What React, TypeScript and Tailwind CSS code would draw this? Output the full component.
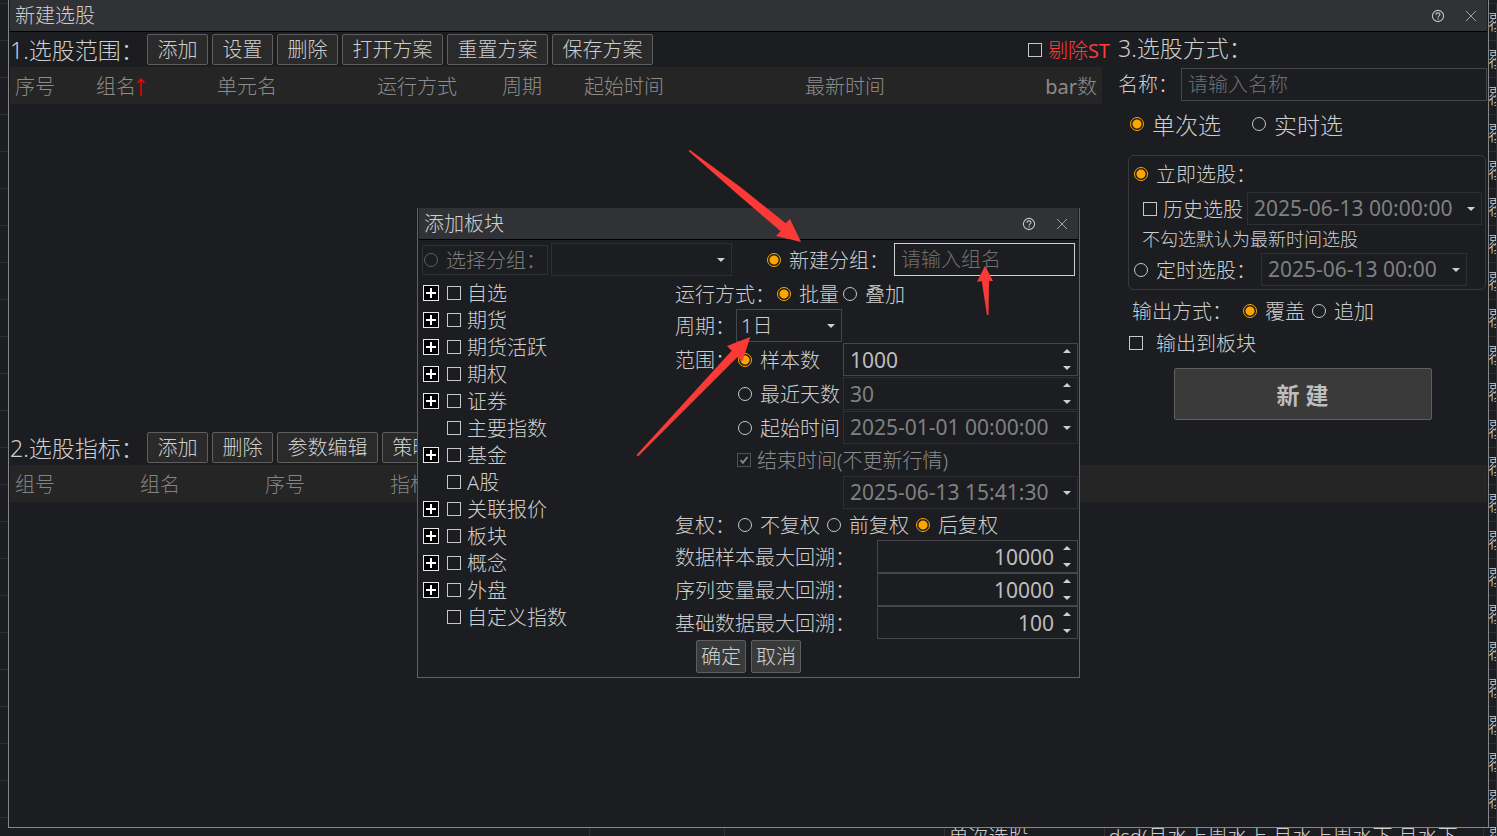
import { useState } from "react"
import type { ReactNode } from "react"
import clsx from "clsx"

interface ResultRow {
    mode: string
    plan: string
    output: string
}

const RESULTS: ResultRow[] = [
    ...Array.from({ length: 22 }, () => ({ mode: "", plan: "", output: "覆" })),
    { mode: "单次选股", plan: "dsd(月水上周水上 月水上周水下 月水下", output: "覆" },
]

const SECTORS = [
    { name: "自选", expandable: true },
    { name: "期货", expandable: true },
    { name: "期货活跃", expandable: true },
    { name: "期权", expandable: true },
    { name: "证券", expandable: true },
    { name: "主要指数", expandable: false },
    { name: "基金", expandable: true },
    { name: "A股", expandable: false },
    { name: "关联报价", expandable: true },
    { name: "板块", expandable: true },
    { name: "概念", expandable: true },
    { name: "外盘", expandable: true },
    { name: "自定义指数", expandable: false },
]

const LOOKBACKS = [
    { label: "数据样本最大回溯：", value: "10000" },
    { label: "序列变量最大回溯：", value: "10000" },
    { label: "基础数据最大回溯：", value: "100" },
]

function TitleBar({ title }: { title: string }) {
    return (
        <header className="flex h-8 items-center border-b border-black bg-[#313236] pl-[5px] text-xl">
            <h1>{title}</h1>
            <div className="ml-auto flex items-center gap-4 pr-[7px]">
                <button type="button" aria-label="帮助" className="flex size-4 items-center justify-center">
                    <svg viewBox="0 0 14 14" className="size-[14px]" fill="none" stroke="#c4c4c4" strokeWidth="1.1">
                        <circle cx="7" cy="7" r="5.6" />
                        <path d="M5 5.8C5 4.5 5.9 3.9 7 3.9s2 .7 2 1.7c0 1.2-1.9 1.4-1.9 2.8M7.1 9.3v1.2" />
                    </svg>
                </button>
                <button type="button" aria-label="关闭" className="flex size-[18px] items-center justify-center">
                    <svg viewBox="0 0 12 12" className="size-3" fill="none" stroke="#a2a2a2" strokeWidth="1">
                        <path d="M1 1l10 10M11 1L1 11" />
                    </svg>
                </button>
            </div>
        </header>
    )
}

function ToolButton({ children }: { children: string }) {
    return (
        <button
            type="button"
            className={clsx(
                "h-[31px] shrink-0 rounded-xs border border-[#5e5e5e] bg-[#2a2a2a] pt-px text-xl leading-none",
                children.length > 2 ? "w-[101px]" : "w-[61px]"
            )}
        >
            {children}
        </button>
    )
}

interface RadioProps {
    name: string
    label: string
    defaultChecked?: boolean
    disabled?: boolean
    className?: string
}

function Radio({ name, label, defaultChecked, disabled, className }: RadioProps) {
    return (
        <label className={clsx("flex shrink-0 items-center gap-2 whitespace-nowrap", disabled && "text-[#7d7d7d]", className)}>
            <input
                type="radio"
                name={name}
                defaultChecked={defaultChecked}
                disabled={disabled}
                className="size-[14px] shrink-0 appearance-none rounded-full border border-[#c8c8c8] checked:border-[#ffa500] checked:bg-[radial-gradient(circle,#ffa500_4px,transparent_5px)] disabled:border-[#606060]"
            />
            <span className="pt-0.5 leading-none">{label}</span>
        </label>
    )
}

function Checkbox({ label, className }: { label: ReactNode; className?: string }) {
    return (
        <label className={clsx("flex shrink-0 items-center whitespace-nowrap", className)}>
            <input type="checkbox" className="size-[14px] shrink-0 appearance-none border border-[#c8c8c8] checked:bg-[#ffa500]" />
            <span className="pt-0.5 leading-none">{label}</span>
        </label>
    )
}

function Caret({ up = false }: { up?: boolean }) {
    return (
        <svg viewBox="0 0 8 4" className={up ? "h-1 w-2 rotate-180" : "h-1 w-2"}>
            <path d="M0 0h8L4 4z" fill="#cfcfcf" />
        </svg>
    )
}

interface DropdownProps {
    label: string
    value: string
    className?: string
    dim?: boolean
}

function Dropdown({ label, value, className, dim }: DropdownProps) {
    return (
        <div className={clsx("relative h-[33px] shrink-0", className)}>
            <select
                aria-label={label}
                className={clsx(
                    "size-full appearance-none border bg-transparent leading-none",
                    dim ? "border-[#2e2f32] pl-1.5 text-[21px] font-normal text-[#808080]" : "border-[#46474a] pl-1 text-xl"
                )}
            >
                <option>{value}</option>
            </select>
            <span className="pointer-events-none absolute inset-y-0 right-[7px] flex items-center">
                <Caret />
            </span>
        </div>
    )
}

interface SpinBoxProps {
    label: string
    initial: string
    className?: string
    dim?: boolean
    alignRight?: boolean
}

function SpinBox({ label, initial, className, dim, alignRight }: SpinBoxProps) {
    const [value, setValue] = useState(initial)
    const step = (delta: number) => setValue(String(Math.max(0, Number(value) + delta)))

    return (
        <div className={clsx("flex h-[33px] shrink-0 border", dim ? "border-[#2e2f32] text-[#808080]" : "border-[#46474a] text-[#bebebe]", className)}>
            <input
                aria-label={label}
                value={value}
                onChange={(e) => setValue(e.target.value)}
                className={clsx("w-full min-w-0 flex-1 bg-transparent pl-1.5 text-[21px] leading-none font-normal", alignRight && "text-right")}
            />
            <div className="flex w-[23px] flex-col pl-1.5 pr-1">
                <button type="button" aria-label="增加" onClick={() => step(1)} className="flex flex-1 items-center justify-center">
                    <Caret up />
                </button>
                <button type="button" aria-label="减少" onClick={() => step(-1)} className="flex flex-1 items-center justify-center pt-0.5">
                    <Caret />
                </button>
            </div>
        </div>
    )
}

// 底层的选股结果表，被窗口遮住大部分
function ResultTable() {
    return (
        <table className="w-full table-fixed border-collapse text-xl leading-none">
            <colgroup>
                <col className="w-[589px]" />
                <col className="w-[135px]" />
                <col className="w-[220px]" />
                <col className="w-[160px]" />
                <col />
                <col className="w-[13px]" />
            </colgroup>
            <tbody>
                <tr className="h-[3px] border-b border-[#2f3033]">
                    <td colSpan={6} className="p-0" />
                </tr>
                {RESULTS.map(({ mode, plan, output }, i) => (
                    <tr key={i} className="h-[37px] border-b border-[#2f3033] [&>td]:overflow-hidden [&>td]:whitespace-nowrap [&>td]:border-r [&>td]:border-[#2f3033] [&>td]:pl-1 [&>td]:pt-0.5">
                        <td />
                        <td />
                        <td />
                        <td>{mode}</td>
                        <td>{plan}</td>
                        <td>{output}</td>
                    </tr>
                ))}
            </tbody>
        </table>
    )
}

function RangeSection() {
    return (
        <section className="min-w-0 flex-1">
            <div className="flex h-[35px] items-center gap-1 text-xl">
                <h2 className="w-[133px] shrink-0 whitespace-nowrap pt-0.5 text-[23px]">1.选股范围：</h2>
                <ToolButton>添加</ToolButton>
                <ToolButton>设置</ToolButton>
                <ToolButton>删除</ToolButton>
                <ToolButton>打开方案</ToolButton>
                <ToolButton>重置方案</ToolButton>
                <ToolButton>保存方案</ToolButton>
                <Checkbox
                    label={<>剔除<span className="font-normal">ST</span></>}
                    className="ml-auto gap-1.5 text-[#ff3b3b]"
                />
            </div>
            <div className="pr-2">
                <table className="w-full table-fixed bg-[#252525] text-xl leading-none text-[#8c8c8c]">
                    <thead>
                        <tr className="h-[37px] text-left [&>th]:px-[5px] [&>th]:pb-0 [&>th]:pt-0.5 [&>th]:font-light">
                            <th className="w-[81px]">序号</th>
                            <th className="w-[121px]">
                                <span className="flex items-center">
                                    组名
                                    <svg viewBox="0 0 10 18" className="h-[18px] w-[10px]" fill="none" stroke="#ff0000" strokeWidth="1.4">
                                        <path d="M5 18V1M1.5 5L5 1l3.5 4" />
                                    </svg>
                                </span>
                            </th>
                            <th className="w-[160px]">单元名</th>
                            <th className="w-[125px]">运行方式</th>
                            <th className="w-[82px]">周期</th>
                            <th className="w-[221px]">起始时间</th>
                            <th>最新时间</th>
                            <th className="w-[80px] text-right">
                                <span className="font-normal">bar</span>数
                            </th>
                        </tr>
                    </thead>
                </table>
            </div>
        </section>
    )
}

function MethodSection() {
    return (
        <section className="w-[377px] shrink-0 pb-[10px] pl-2 text-xl">
            <h2 className="flex h-8 items-center text-[23px]">3.选股方式：</h2>
            <div className="mt-1 flex h-[33px] items-center">
                <label htmlFor="plan-name" className="w-[63px] shrink-0 whitespace-nowrap">名称：</label>
                <input
                    id="plan-name"
                    placeholder="请输入名称"
                    className="h-full min-w-0 flex-1 border border-[#46474a] bg-transparent pl-1.5 placeholder:text-[#707070]"
                />
            </div>
            <div className="flex h-[46px] items-center gap-[31px] pl-3 text-[23px]">
                <Radio name="mode" label="单次选" defaultChecked />
                <Radio name="mode" label="实时选" />
            </div>
            <div className="ml-[10px] mr-px mt-2 rounded-md border border-[#38393c] pb-[3px] pl-[5px] pr-[3px]">
                <Radio name="schedule" label="立即选股：" defaultChecked className="h-9" />
                <div className="flex items-center justify-between pl-[9px]">
                    <Checkbox label="历史选股" className="gap-1.5" />
                    <Dropdown label="历史时间" value="2025-06-13 00:00:00" dim className="w-[235px]" />
                </div>
                <p className="flex h-7 items-center pl-2 text-lg">不勾选默认为最新时间选股</p>
                <div className="flex items-center gap-[5px]">
                    <Radio name="schedule" label="定时选股：" />
                    <Dropdown label="定时时间" value="2025-06-13 00:00" dim className="w-[206px]" />
                </div>
            </div>
            <div className="flex h-[42px] items-center pl-[14px]">
                <span className="w-[111px] pt-0.5 leading-none">输出方式：</span>
                <div className="flex gap-[7px]">
                    <Radio name="output" label="覆盖" defaultChecked />
                    <Radio name="output" label="追加" />
                </div>
            </div>
            <Checkbox label="输出到板块" className="h-[22px] gap-[13px] pl-[11px]" />
            <button
                type="button"
                className="mx-auto mt-[14px] block h-[52px] w-[258px] rounded-xs border border-[#5e5e5e] bg-[#3a3a3a] pt-0.5 text-[23px] font-bold text-[#bebebe]"
            >
                新 建
            </button>
        </section>
    )
}

function IndicatorSection() {
    return (
        <section>
            <div className="flex h-[35px] items-center gap-1">
                <h2 className="w-[133px] shrink-0 whitespace-nowrap pt-0.5 text-[23px]">2.选股指标：</h2>
                <ToolButton>添加</ToolButton>
                <ToolButton>删除</ToolButton>
                <ToolButton>参数编辑</ToolButton>
                <ToolButton>策略编辑</ToolButton>
            </div>
            <table className="w-full table-fixed bg-[#252525] text-xl leading-none text-[#848484]">
                <thead>
                    <tr className="h-[37px] text-left [&>th]:px-[5px] [&>th]:pb-0 [&>th]:pt-0.5 [&>th]:font-light">
                        <th className="w-[125px]">组号</th>
                        <th className="w-[125px]">组名</th>
                        <th className="w-[125px]">序号</th>
                        <th>指标</th>
                    </tr>
                </thead>
            </table>
        </section>
    )
}

function SectorTree() {
    return (
        <ul className="w-[257px] shrink-0 pl-[5px]">
            {SECTORS.map(({ name, expandable }) => (
                <li key={name} className="flex h-[27px] items-center gap-2">
                    {expandable ? (
                        <button type="button" aria-label={`展开${name}`} className="size-4 border border-[#e8e8e8] bg-black">
                            <svg viewBox="0 0 14 14" className="size-[14px]" stroke="#ffffff" strokeWidth="2">
                                <path d="M2 7h10M7 2v10" />
                            </svg>
                        </button>
                    ) : (
                        <span className="size-4" />
                    )}
                    <Checkbox label={name} className="gap-1.5" />
                </li>
            ))}
        </ul>
    )
}

function FormRow({ label, className, children }: { label?: string; className: string; children: ReactNode }) {
    return (
        <div className={clsx("flex items-center", className)}>
            <span className="w-[63px] shrink-0 whitespace-nowrap pt-0.5 leading-none">{label}</span>
            {children}
        </div>
    )
}

function AddSectorDialog() {
    return (
        <div role="dialog" aria-label="添加板块" className="border border-t-0 border-[#0a78d0] bg-[#1c1d20] text-xl">
            <div className="px-px">
                <TitleBar title="添加板块" />
            </div>
            <div className="flex items-center gap-[3px] px-1 py-[3px]">
                <div className="flex h-[30px] w-[126px] items-center border border-[#2e2f32] pl-px">
                    <Radio name="group" label="选择分组：" disabled />
                </div>
                <Dropdown label="选择分组" value="" dim className="w-[181px]" />
                <div className="ml-auto flex items-center gap-[5px]">
                    <Radio name="group" label="新建分组：" defaultChecked />
                    <input
                        aria-label="组名"
                        placeholder="请输入组名"
                        className="h-[33px] w-[181px] border border-[#d0d0d0] bg-transparent pl-1.5 placeholder:text-[#707070]"
                    />
                </div>
            </div>
            <div className="flex pb-1">
                <SectorTree />
                <div className="min-w-0 flex-1 pr-px">
                    <div className="flex h-[30px] items-center gap-1">
                        <span className="w-[98px] shrink-0 whitespace-nowrap pt-0.5 leading-none">运行方式：</span>
                        <Radio name="run" label="批量" defaultChecked />
                        <Radio name="run" label="叠加" />
                    </div>
                    <div className="flex items-center">
                        <span className="w-[61px] whitespace-nowrap pt-0.5 leading-none">周期：</span>
                        <Dropdown label="周期" value="1日" className="w-[106px]" />
                    </div>
                    <div className="mt-px flex flex-col gap-px">
                        <FormRow label="范围：" className="h-[33px]">
                            <Radio name="range" label="样本数" defaultChecked className="w-[105px]" />
                            <SpinBox label="样本数" initial="1000" className="flex-1" />
                        </FormRow>
                        <FormRow className="h-[33px]">
                            <Radio name="range" label="最近天数" className="w-[105px]" />
                            <SpinBox label="最近天数" initial="30" dim className="flex-1" />
                        </FormRow>
                        <FormRow className="h-[33px]">
                            <Radio name="range" label="起始时间" className="w-[105px]" />
                            <Dropdown label="起始时间" value="2025-01-01 00:00:00" dim className="flex-1" />
                        </FormRow>
                    </div>
                    <label className="ml-[62px] flex h-8 items-center gap-1.5 whitespace-nowrap text-[#8c8c8c]">
                        <span className="relative flex">
                            <input type="checkbox" defaultChecked disabled className="size-[14px] appearance-none border border-[#505050]" />
                            <svg viewBox="0 0 14 14" className="absolute inset-0 size-[14px]" fill="none" stroke="#8a8a8a" strokeWidth="1.8">
                                <path d="M3.5 7l2.3 2.8L10.5 4" />
                            </svg>
                        </span>
                        <span className="pt-0.5 leading-none">结束时间(不更新行情)</span>
                    </label>
                    <Dropdown label="结束时间" value="2025-06-13 15:41:30" dim className="ml-[168px]" />
                    <FormRow label="复权：" className="h-[31px]">
                        <div className="flex gap-[7px]">
                            <Radio name="adjust" label="不复权" />
                            <Radio name="adjust" label="前复权" />
                            <Radio name="adjust" label="后复权" defaultChecked />
                        </div>
                    </FormRow>
                    {LOOKBACKS.map(({ label, value }) => (
                        <div key={label} className="flex items-center justify-between">
                            <span className="whitespace-nowrap pt-0.5 leading-none">{label}</span>
                            <SpinBox label={label} initial={value} alignRight className="w-[201px]" />
                        </div>
                    ))}
                    <div className="mt-px flex gap-[5px] pl-[21px]">
                        <button type="button" className="h-[33px] w-[50px] rounded-xs border border-[#5e5e5e] bg-[#3a3a3a] pt-px leading-none">确定</button>
                        <button type="button" className="h-[33px] w-[50px] rounded-xs border border-[#5e5e5e] bg-[#3a3a3a] pt-px leading-none">取消</button>
                    </div>
                </div>
            </div>
        </div>
    )
}

export default function App() {
    return (
        <div className="relative h-screen overflow-hidden bg-[#1c1d20] font-['Noto_Sans','Noto_Sans_CJK_SC',sans-serif] font-light text-[#cecece]">
            <ResultTable />

            <main className="absolute inset-x-2 bottom-2 top-0 overflow-hidden border border-t-0 border-[#858585] bg-[#1c1d20] px-px">
                <TitleBar title="新建选股" />
                <div className="flex">
                    <RangeSection />
                    <MethodSection />
                </div>
                <IndicatorSection />
            </main>

            <div className="absolute inset-x-0 top-[208px] mx-auto w-[663px]">
                <AddSectorDialog />
                {/* 操作指引箭头 */}
                <svg
                    viewBox="636 149 358 308"
                    className="pointer-events-none absolute -top-[59px] left-[219px] h-[308px] w-[358px]"
                    fill="#fb3a37"
                >
                    <path d="M688.5 151L690 150L741 187.500L785.7 223.3L790 219L801 242L776 236L780.7 231.3L735 192Z" />
                    <path d="M636.5 455L638 456.500L737.5 357L742.400 361.500L750.3 337L727 346L731.7 350.7Z" />
                    <path d="M987 315L988.500 315L989 281L993 281L985 265.7L977 282L981.7 281Z" />
                </svg>
            </div>
        </div>
    )
}
